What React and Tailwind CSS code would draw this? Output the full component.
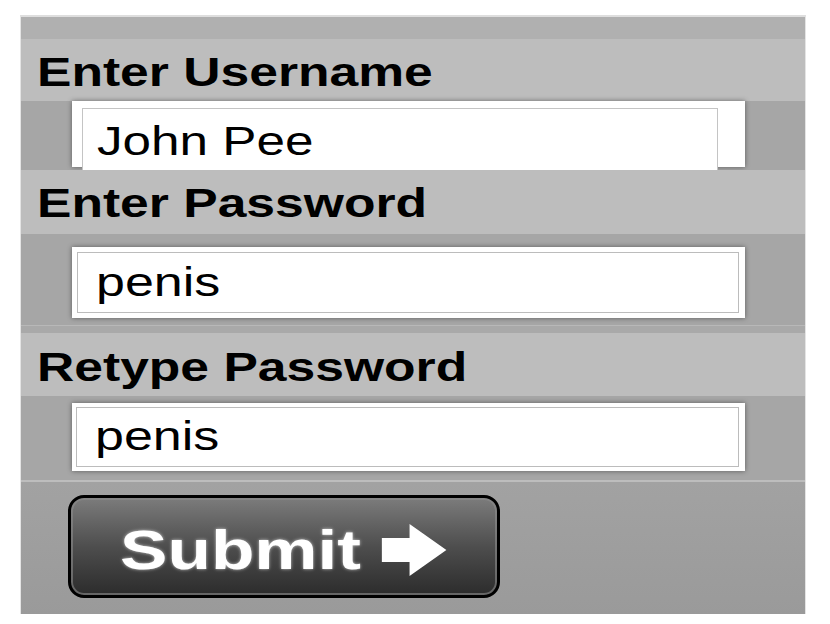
import React from "react";

const font = { fontFamily: '"Liberation Sans", Arial, sans-serif' };

function Label({ text, h, pt }) {
  return (
    <div className={`bg-[#bdbdbd] pl-[16px] ${h} ${pt}`}>
      <span className="inline-block origin-left scale-x-[1.29] text-[40px] leading-[40px] font-bold text-black whitespace-nowrap">
        {text}
      </span>
    </div>
  );
}

function Field({ value, bandH, boxMt, boxH, innerClass, textPt }) {
  return (
    <div className={`bg-[#a6a6a6] pl-[51px] ${bandH}`}>
      <div className={`w-[673px] bg-white shadow-[0_0_5px_rgba(0,0,0,0.45)] ${boxMt} ${boxH} ${innerClass}`}>
        <div className={`h-full border border-[#bcbcbc] pl-[18px] ${textPt}`}>
          <span className="inline-block origin-left scale-x-[1.3] text-[40px] leading-[40px] text-black whitespace-nowrap">
            {value}
          </span>
        </div>
      </div>
    </div>
  );
}

export default function App() {
  return (
    <div className="w-[830px] h-[624px] bg-white pt-[15px] pl-[20px]" style={font}>
      <div className="w-[786px] h-[599px] flex flex-col border-t-2 border-t-[#dedede] border-x border-x-[#e4e4e4]">
        <div className="h-[22px] bg-[#b0b0b0]" />
        <Label text="Enter Username" h="h-[62px]" pt="pt-[13px]" />
        <div className="h-[69px] bg-[#a6a6a6] pl-[51px]">
          <div className="w-[673px] h-[66px] bg-white shadow-[0_0_5px_rgba(0,0,0,0.45)] pl-[10px] pt-[7px]">
            <div className="w-[636px] h-[64px] border border-[#c4c4c4] bg-white pl-[14px] pt-[12px]">
              <span className="inline-block origin-left scale-x-[1.28] text-[40px] leading-[40px] text-black whitespace-nowrap">
                John Pee
              </span>
            </div>
          </div>
        </div>
        <Label text="Enter Password" h="h-[64px]" pt="pt-[13px]" />
        <Field
          value="penis"
          bandH="h-[91px]"
          boxMt="mt-[13px]"
          boxH="h-[71px]"
          innerClass="p-[5px] pr-[6px]"
          textPt="pt-[9px]"
        />
        <div className="h-[8px] bg-[#a9a9a9] border-t border-t-[#b8b8b8]" />
        <Label text="Retype Password" h="h-[63px]" pt="pt-[14px]" />
        <Field
          value="penis"
          bandH="h-[84px]"
          boxMt="mt-[7px]"
          boxH="h-[68px]"
          innerClass="p-[4px] pr-[6px]"
          textPt="pt-[8px]"
        />
        <div className="h-[2px] bg-[#bdbdbd]" />
        <div className="h-[132px] bg-gradient-to-b from-[#a2a2a2] to-[#9a9a9a] pl-[47px] pt-[13px]">
          <div className="w-[432px] h-[103px] rounded-[16px] border-[3px] border-black bg-gradient-to-b from-[#7c7c7c] via-[#4e4e4e] to-[#2c2c2c] shadow-[inset_0_0_0_2px_rgba(140,140,140,0.6)] pl-[49px] pt-[24px]">
            <div className="inline-flex items-start origin-left scale-x-[1.27]">
              <span className="text-[56px] leading-[56px] font-bold text-white whitespace-nowrap [text-shadow:0_0_3px_rgba(255,255,255,0.7)]">
                Submit
              </span>
              <svg width="52" height="52" viewBox="0 0 52 52" className="ml-[16px] mt-[2px]">
                <path d="M0 14 H22 V0 L51 26 L22 52 V38 H0 Z" fill="white" />
              </svg>
            </div>
          </div>
        </div>
      </div>
    </div>
  );
}
